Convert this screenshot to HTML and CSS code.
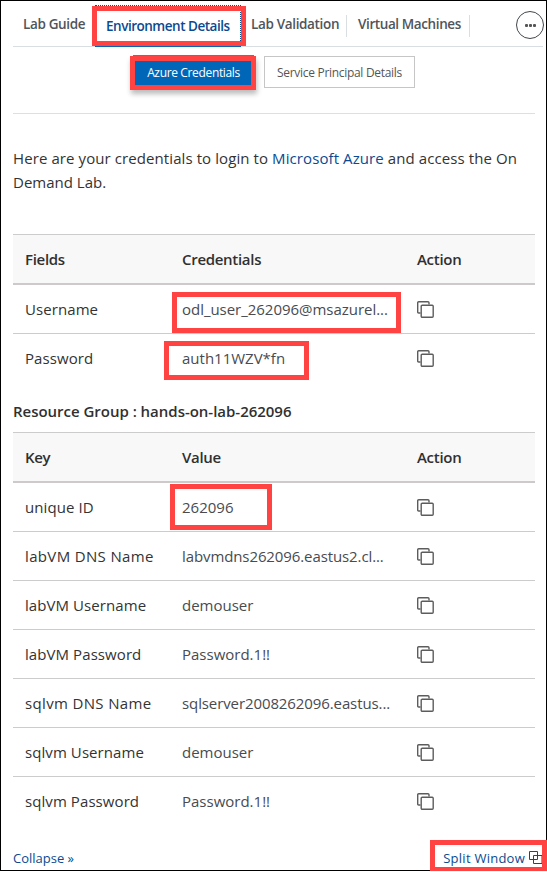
FILE: index.html
```
<!DOCTYPE html>
<html lang="en">
<head>
<meta charset="utf-8">
<title>Environment Details</title>
<link rel="stylesheet" href="styles.css">
</head>
<body>
<svg class="defs" aria-hidden="true"><symbol id="copy" viewBox="0 0 17 17"><path d="M3.500 12H1.700Q.7 12 .7 11V1.700Q.7 .7 1.700 .7H11Q12 .7 12 1.700V3.500"/><rect x="4.200" y="4.200" width="12" height="12" rx="1"/></symbol></svg>
<main class="panel">
  <nav class="tabs">
    <a class="tab guide"><span>Lab Guide</span></a>
    <a class="tab active marked"><span>Environment Details</span></a>
    <a class="tab validation"><span>Lab Validation</span></a>
    <a class="tab machines"><span>Virtual Machines</span></a>
    <button class="more" aria-label="More"><i></i><i></i><i></i></button>
  </nav>
  <div class="switch">
    <button class="btn primary marked"><span>Azure Credentials</span></button>
    <button class="btn"><span>Service Principal Details</span></button>
  </div>
  <p class="intro"><span class="line1">Here are your credentials to login to <a>Microsoft Azure</a> and access the On</span><br><span class="line2">Demand Lab.</span></p>
  <section class="table">
    <div class="row head"><b>Fields</b><b>Credentials</b><b>Action</b></div>
    <div class="row"><span>Username</span><span class="marked user">odl_user_262096@msazurel...</span><svg class="copy"><use href="#copy"/></svg></div>
    <div class="row"><span>Password</span><span class="marked pass">auth11WZV*fn</span><svg class="copy"><use href="#copy"/></svg></div>
  </section>
  <h2><span>Resource Group : hands-on-lab-262096</span></h2>
  <section class="table">
    <div class="row head"><b>Key</b><b>Value</b><b>Action</b></div>
    <div class="row"><span>unique ID</span><span class="marked uid">262096</span><svg class="copy"><use href="#copy"/></svg></div>
    <div class="row"><span class="dns">labVM DNS Name</span><span class="host">labvmdns262096.eastus2.cl...</span><svg class="copy"><use href="#copy"/></svg></div>
    <div class="row"><span>labVM Username</span><span>demouser</span><svg class="copy"><use href="#copy"/></svg></div>
    <div class="row"><span>labVM Password</span><span>Password.1!!</span><svg class="copy"><use href="#copy"/></svg></div>
    <div class="row"><span class="dns">sqlvm DNS Name</span><span class="host">sqlserver2008262096.eastus...</span><svg class="copy"><use href="#copy"/></svg></div>
    <div class="row"><span>sqlvm Username</span><span>demouser</span><svg class="copy"><use href="#copy"/></svg></div>
    <div class="row"><span>sqlvm Password</span><span>Password.1!!</span><svg class="copy"><use href="#copy"/></svg></div>
  </section>
  <footer>
    <a>Collapse »</a>
    <a class="split marked"><span>Split Window</span><svg viewBox="0 0 14 14"><path d="M.5 .5h8v8h-8zM4.500 4.500h8.500v8h-8.500z"/></svg></a>
  </footer>
</main>
</body>
</html>
```
FILE: styles.css
```
*, *::after { box-sizing: border-box; }
body { margin: 0; background: #fff; color: #333; font: 15px/24px "Open Sans", "Noto Sans", sans-serif; }
.defs { position: absolute; width: 0; height: 0; }
.panel { width: 547px; height: 871px; border: 1px solid #000; padding: 4px 11px 0 12px; display: flex; flex-direction: column; }
a { color: #0b4a91; }
button { font: inherit; background: none; margin: 0; padding: 0; }
span, b, a { white-space: nowrap; }
.marked { position: relative; }
.marked::after { content: ""; position: absolute; border: 5px solid #ff4343; z-index: 2; }

.tabs { display: flex; width: 530px; height: 42px; flex: none; border-bottom: 1px solid #d9dee2; font-size: 13.5px; font-weight: 600; line-height: 20px; letter-spacing: -.35px; }
.tab { height: 22px; margin-top: 10px; color: #505559; }
.tab span { position: relative; top: -1px; }
.guide { width: 82px; padding-left: 10px; }
.active { width: 146px; height: 42px; margin-top: 0; padding: 10px 0 0 10px; border: 1px dotted #0b4a91; border-bottom: 1px solid #0067b8; color: #0b4a91; letter-spacing: -.48px; }
.active span { top: 0; }
.active::after { left: -4px; top: 0; width: 154px; height: 40px; }
.validation { width: 106px; padding-left: 10px; border-right: 1px solid #d9dee2; }
.machines { width: 123px; padding-left: 11px; border-right: 1px solid #d9dee2; letter-spacing: -.4px; }
.more { width: 28px; height: 28px; margin: 6px 0 0 auto; border: 1px solid #41474c; border-radius: 50%; display: flex; align-items: center; justify-content: center; gap: 1px; transform: translateX(1px); }
.more i { width: 3px; height: 3px; border-radius: 1px; background: #555; }

.switch { width: 522px; height: 67px; flex: none; display: flex; gap: 10px; padding: 9px 0 0 118px; border-bottom: 1px solid #dde0e2; }
.btn { width: 151px; height: 32px; border: 1px solid #c6c6c6; color: #555; font-size: 12px; line-height: 32px; letter-spacing: -.3px; }
.primary { width: 121px; height: 33px; margin: -1px 0 0 2px; background: #0067b8; border: 0; border-top: 1px solid #278bd9; color: #fff; line-height: 34px; letter-spacing: -.35px; }
.primary::after { left: -3px; top: 0; width: 126px; height: 34px; box-shadow: 1px 4px 5px #0004; }

.intro { margin: 32px 0 40px; height: 48px; }
.line1 { letter-spacing: .09px; }
.table { width: 522px; flex: none; border-top: 1px solid #ccc; }
.row { height: 49px; display: grid; grid-template-columns: 157px 235px 1fr; align-items: center; padding-left: 12px; border-bottom: 1px solid #ccc; }
.row > * { justify-self: start; }
.row:last-child { border-bottom-color: transparent; }
.row > span { color: #484b50; }
.row > span:first-child { color: #333; letter-spacing: .08px; }
.row > .dns:first-child { letter-spacing: .35px; }
.host { letter-spacing: -.1px; }
.head { height: 50px; background: #f8f8f8; border-bottom: 2px solid #cfcaca; }
b, h2 { font-weight: 600; color: #303030; font-size: 15px; letter-spacing: -.3px; }
.copy { width: 17px; height: 17px; fill: none; stroke: #5c5c5c; stroke-width: 1.4; }
h2 { margin: 16px 0 9px; height: 24px; line-height: 24px; letter-spacing: -.02px; }
.user { letter-spacing: -.03px; }
.user::after { left: -10px; top: -5px; width: 229px; height: 41px; }
.pass::after { left: -18px; top: -5px; width: 145px; height: 39px; }
.uid::after { left: -12px; top: -11px; width: 102px; height: 46px; }
footer { display: flex; justify-content: space-between; width: 530px; margin-top: 20px; font-size: 13px; }
.split { display: flex; letter-spacing: .25px; }
.split svg { width: 14px; height: 14px; margin: 5px 0 0 4px; fill: none; stroke: #0b4a91; }
.split::after { right: -4px; top: -6px; width: 117px; height: 32px; }
```
